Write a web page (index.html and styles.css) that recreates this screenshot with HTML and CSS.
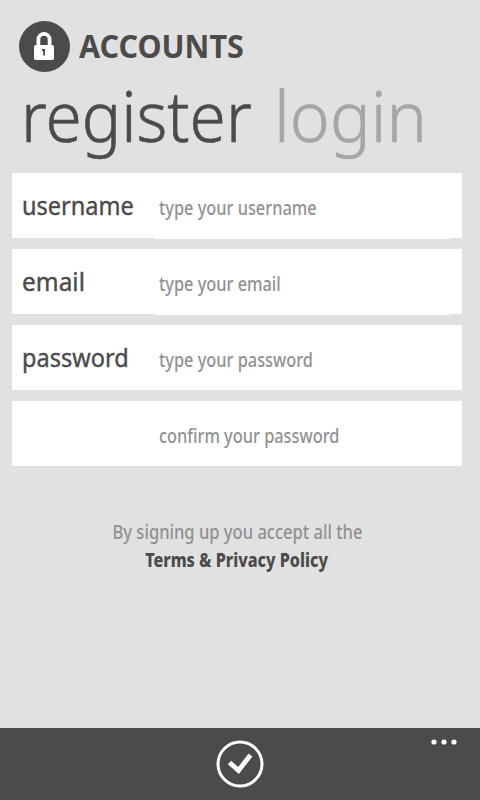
FILE: index.html
```html
<!DOCTYPE html>
<html lang="en">
<head>
<meta charset="utf-8">
<title>Accounts</title>
<link rel="stylesheet" href="styles.css">
</head>
<body>
<div class="screen">
  <header class="brand">
    <svg class="lock" viewBox="0 0 52 52"><circle cx="26.5" cy="26.5" r="25.5" fill="#4b4b4b"/><path d="M20.5 27v-7a5.6 5.6 0 0 1 11.2 0v7" transform="translate(-.1 -.5)" fill="none" stroke="#fff" stroke-width="3.8"/><rect x="16" y="25" width="20" height="15" rx="1.8" fill="#fff"/><path d="M24 29h3v6.5h-1.8v-4.5H24z" fill="#4b4b4b"/></svg>
    <h1>ACCOUNTS</h1>
  </header>
  <nav class="pivot"><a class="active">register</a><a class="login">login</a></nav>
  <form class="fields">
    <label class="row"><span class="name"><b>username</b></span><span class="entry tall"><i>type your username</i></span></label>
    <label class="row"><span class="name"><b class="email">email</b></span><span class="entry tall"><i>type your email</i></span></label>
    <label class="row"><span class="name"><b>password</b></span><span class="entry"><i>type your password</i></span></label>
    <label class="row"><span class="name"></span><span class="entry"><i>confirm your password</i></span></label>
  </form>
  <p class="terms"><span>By signing up you accept all the</span><strong>Terms &amp; Privacy Policy</strong></p>
  <footer class="appbar">
    <svg class="ok" viewBox="0 0 48 48"><circle cx="24" cy="24" r="22" fill="none" stroke="#fff" stroke-width="3"/><path d="M13.5 22.5l9 8L34.5 15" fill="none" stroke="#fff" stroke-width="4.8"/></svg>
    <svg class="more" viewBox="0 0 26 6"><circle cx="3" cy="3" r="2.6"/><circle cx="13" cy="3" r="2.6"/><circle cx="23" cy="3" r="2.6"/></svg>
  </footer>
</div>
</body>
</html>
```

FILE: styles.css
```css
* { box-sizing: border-box; }
body { margin: 0; background: #e1e1e1; color: #4b4b4b; font-family: "Noto Sans", sans-serif; }
.screen { height: 800px; display: flex; flex-direction: column; overflow: hidden; }
.brand { height: 80px; padding: 20px 0 0 18px; display: flex; }
.lock { width: 52px; height: 52px; }
h1 { margin: 0 0 0 9px; font-size: 32px; line-height: 51px; font-weight: 700; transform: scaleX(.953); transform-origin: 0 50%; }
.pivot { height: 93px; padding-left: 21px; display: flex; font-size: 69px; line-height: 70px; font-weight: 300; white-space: nowrap; -webkit-text-stroke: .6px currentColor; }
.pivot a { transform: scaleX(.952); transform-origin: 0 50%; }
.active { width: 253px; }
.pivot .login { color: #a6a6a6; transform: scaleX(.985); }
.fields { margin: 0 18px 0 12px; display: flex; flex-direction: column; gap: 11px; }
.row { height: 65px; background: #fff; display: flex; }
.name { width: 143px; padding-left: 10px; }
.name b, .entry i, .terms span, .terms strong { display: inline-block; white-space: nowrap; font-style: normal; }
.name b { font-size: 26px; line-height: 64px; font-weight: 400; -webkit-text-stroke: .4px currentColor; transform: scaleX(.905); transform-origin: 0 50%; }
.name .email { transform: scaleX(.94); }
.entry { width: 295px; height: 65px; padding-left: 4px; background: #fff; color: #919191; }
.entry.tall { height: 66px; }
.entry i { font-size: 19px; line-height: 70px; font-weight: 500; transform: scaleX(.86); transform-origin: 0 50%; }
.terms { margin: 52px 6px 0 0; display: flex; flex-direction: column; align-items: center; font-size: 19px; line-height: 28px; }
.terms span { color: #919191; font-weight: 500; transform: scaleX(.871); }
.terms strong { font-weight: 800; transform: scaleX(.85); }
.appbar { position: relative; height: 72px; margin-top: auto; background: #4b4b4b; display: flex; justify-content: center; align-items: center; }
.ok { width: 48px; height: 48px; }
.more { position: absolute; top: 11px; right: 23.5px; width: 26px; height: 6px; fill: #fff; }
```
